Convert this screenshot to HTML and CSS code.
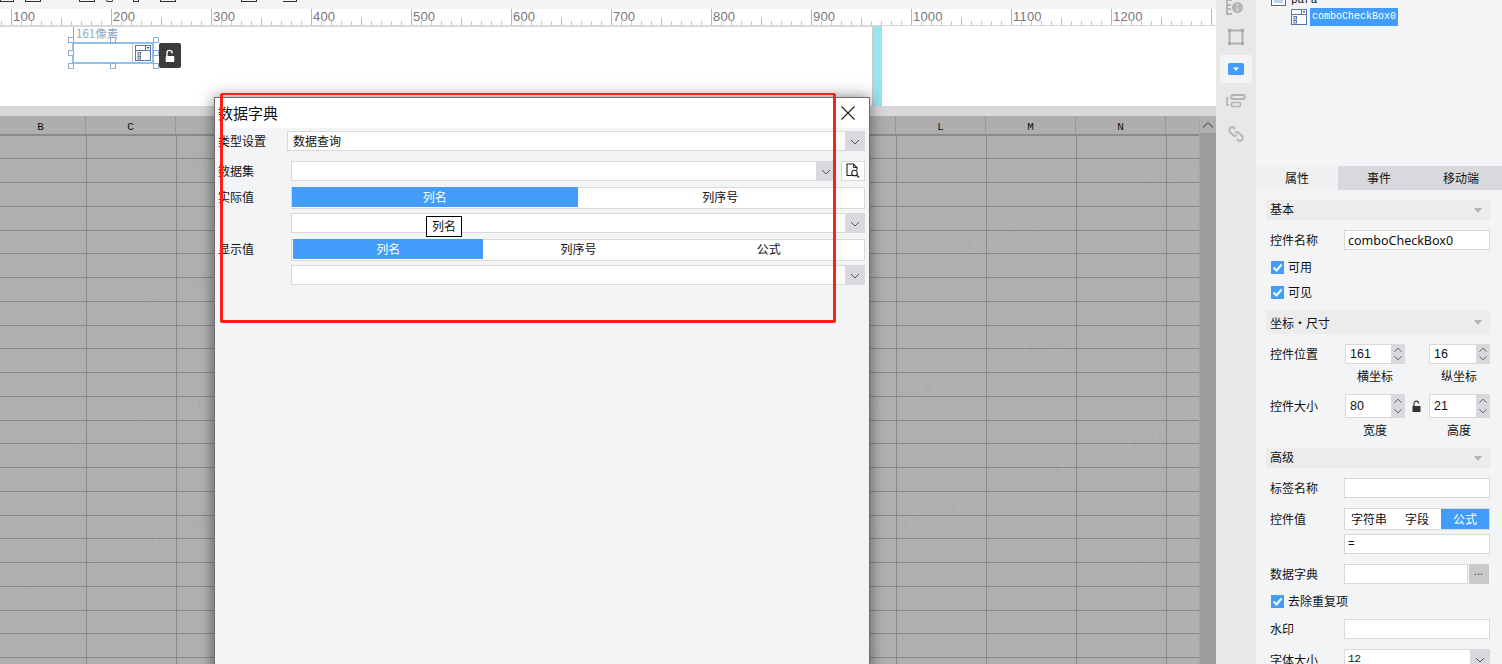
FILE: index.html
```html
<!DOCTYPE html>
<html lang="zh">
<head>
<meta charset="utf-8">
<title>数据字典</title>
<link rel="stylesheet" href="styles.css">
</head>
<body>
<div class="app">
  <main class="main">
    <div class="toolbar">
      <i class="tb tb1"></i><i class="tb tb2"></i><i class="tb tb3"></i><i class="tb tb4"></i><i class="tb tb5"></i><i class="tb tb6"></i><i class="tb tb7"></i><i class="tb tb8"></i>
    </div>
    <div class="ruler">
      <span>100</span><span>200</span><span>300</span><span>400</span><span>500</span><span>600</span><span>700</span><span>800</span><span>900</span><span>1000</span><span>1100</span><span>1200</span>
    </div>
    <div class="canvas">
      <div class="canvas-page"></div>
      <div class="canvas-edge"></div>
      <div class="pos-label">161像素</div>
      <div class="widget">
        <svg class="widget-icon" viewBox="0 0 16 16"><rect x=".5" y=".5" width="15" height="15" fill="#fff" stroke="#5a73a8"/><path d="M.5 5.5h15M10.500 .5v5" stroke="#5a73a8" fill="none"/><path d="M11.500 2h3l-1.500 2z" fill="#3a4f88"/><rect x="3" y="7.500" width="2.500" height="2.500" fill="none" stroke="#5a73a8"/><rect x="3" y="11.500" width="2.500" height="2.500" fill="none" stroke="#5a73a8"/></svg>
      </div>
      <i class="handle h-tl"></i><i class="handle h-tm"></i><i class="handle h-tr"></i><i class="handle h-ml"></i><i class="handle h-mr"></i><i class="handle h-bl"></i><i class="handle h-bm"></i><i class="handle h-br"></i>
      <div class="lock-tile">
        <svg viewBox="0 0 14 16" width="12" height="14"><path d="M3.500 8V4.500a3 3 0 0 1 6 0V5" fill="none" stroke="#fff" stroke-width="1.600"/><rect x="2" y="8" width="10" height="7" rx="1" fill="#fff"/></svg>
      </div>
    </div>
    <div class="band"></div>
    <div class="sheet">
      <div class="grid-area">
        <div class="col-head">
          <span>B</span><span>C</span><span></span><span></span><span></span><span></span><span></span><span></span><span></span><span></span><span>L</span><span>M</span><span>N</span><span></span>
        </div>
        <div class="cells">
          <div class="wm wm1">$fine_username + "" + SQL("OA", "select workcode from oaadmin.hrmresource where loginid = '" + $fine_username + "", 1, 1)</div>
          <div class="wm wm2">$fine_username + "" + SQL("OA", "select workcode from oaadmin.hrmresource where loginid = '" + $fine_username + "", 1, 1)</div>
          <div class="wm wm3">$fine_username + "" + SQL("OA", "select workcode from oaadmin.hrmresource where loginid = '" + $fine_username + "", 1, 1)</div>
          <div class="wm wm4">$fine_username + "" + SQL("OA", "select workcode from oaadmin.hrmresource where loginid = '" + $fine_username + "", 1, 1)</div>
          <div class="wm wm5">$fine_username + "" + SQL("OA", "select workcode from oaadmin.hrmresource where loginid = '" + $fine_username + "", 1, 1)</div>
          <div class="wm wm6">$fine_username + "" + SQL("OA", "select workcode from oaadmin.hrmresource where loginid = '" + $fine_username + "", 1, 1)</div>
          <div class="wm wm7">$fine_username + "" + SQL("OA", "select workcode from oaadmin.hrmresource where loginid = '" + $fine_username + "", 1, 1)</div>
          <div class="wm wm8">$fine_username + "" + SQL("OA", "select workcode from oaadmin.hrmresource where loginid = '" + $fine_username + "", 1, 1)</div>
        </div>
      </div>
      <div class="vscroll">
        <div class="vscroll-btn"><svg viewBox="0 0 12 8" width="12" height="8"><path d="M1 6.500 6 1.500l5 5" fill="none" stroke="#666" stroke-width="1.200"/></svg></div>
      </div>
    </div>
  </main>

  <nav class="rail">
    <div class="rail-item rail-first">
      <svg viewBox="0 0 20 20" width="20" height="20"><path d="M8 3H3v14h5" fill="none" stroke="#b4b4b4" stroke-width="2"/><path d="M3 8h4M3 12h4" stroke="#b4b4b4" stroke-width="2"/><circle cx="13.500" cy="10.500" r="5.500" fill="#b4b4b4"/><path d="M13.500 7v1.500M13.500 10v4" stroke="#e8e8e9" stroke-width="1.600"/></svg>
    </div>
    <div class="rail-item">
      <svg viewBox="0 0 16 16" width="16" height="16"><rect x="1.500" y="1.500" width="13" height="13" fill="none" stroke="#b0b0b0" stroke-width="2"/><path d="M0 0h3v3H0zM13 0h3v3h-3zM0 13h3v3H0zM13 13h3v3h-3z" fill="#a8a8a8"/></svg>
    </div>
    <div class="rail-item rail-active">
      <svg viewBox="0 0 16 12" width="16" height="12"><rect width="16" height="12" rx="1.500" fill="#429dfa"/><path d="M5 4.500h6L8 8z" fill="#fff"/></svg>
    </div>
    <div class="rail-item">
      <svg viewBox="0 0 20 14" width="20" height="14"><path d="M3 4H1v7h2" fill="none" stroke="#b4b4b4" stroke-width="1.500"/><rect x="5.500" y="1" width="13" height="4" rx="1" fill="none" stroke="#b4b4b4" stroke-width="2"/><rect x="5.500" y="8.500" width="9" height="4" rx="1" fill="none" stroke="#b4b4b4" stroke-width="1.600"/></svg>
    </div>
    <div class="rail-item">
      <svg viewBox="0 0 18 18" width="18" height="18"><g fill="none" stroke="#b8b8b8" stroke-width="2.200"><path d="M8 4 6.500 2.500a3 3 0 0 0-4 4L6 10a3 3 0 0 0 4 0"/><path d="M10 14l1.500 1.500a3 3 0 0 0 4-4L12 8a3 3 0 0 0-4 0"/></g></svg>
    </div>
  </nav>

  <aside class="panel">
    <div class="tree">
      <div class="tree-row tree-para">
        <svg viewBox="0 0 15 16" width="15" height="16"><rect x=".5" y=".5" width="14" height="15" fill="#fff" stroke="#666"/><rect x="3" y="3" width="9" height="10" fill="#bcd4f4"/></svg>
        <span class="tree-text">para</span>
      </div>
      <div class="tree-row tree-combo">
        <svg viewBox="0 0 16 16" width="16" height="16"><rect x=".5" y=".5" width="15" height="15" fill="#fff" stroke="#5a73a8"/><path d="M.5 5.500h15M10.500 .5v5" stroke="#5a73a8" fill="none"/><path d="M11.500 2h3l-1.500 2z" fill="#3a4f88"/><rect x="3" y="7.500" width="2.500" height="2.500" fill="none" stroke="#5a73a8"/><rect x="3" y="11.500" width="2.500" height="2.500" fill="none" stroke="#5a73a8"/></svg>
        <span class="tree-text tree-selected">comboCheckBox0</span>
      </div>
    </div>
    <div class="tabs">
      <span class="tab tab-active">属性</span><span class="tab">事件</span><span class="tab">移动端</span>
    </div>
    <div class="form">
      <div class="bar bar-basic"><span>基本</span><i class="tri"></i></div>
      <div class="prow r-name"><label>控件名称</label><div class="field field-text">comboCheckBox0</div></div>
      <div class="check r-c1"><i class="box"><svg viewBox="0 0 13 13"><path d="M2.500 6.500 5.500 9.500 10.500 3.500" fill="none" stroke="#fff" stroke-width="2"/></svg></i>可用</div>
      <div class="check r-c2"><i class="box"><svg viewBox="0 0 13 13"><path d="M2.500 6.500 5.500 9.500 10.500 3.500" fill="none" stroke="#fff" stroke-width="2"/></svg></i>可见</div>
      <div class="bar bar-pos"><span>坐标・尺寸</span><i class="tri"></i></div>
      <div class="prow r-pos">
        <label>控件位置</label>
        <div class="spin"><span>161</span><b class="spin-btns"><svg viewBox="0 0 14 20"><path d="M3 7.500l4-4 4 4M3 12.500l4 4 4-4" fill="none" stroke="#555"/></svg></b></div>
        <div class="spin-gap"></div>
        <div class="spin"><span>16</span><b class="spin-btns"><svg viewBox="0 0 14 20"><path d="M3 7.500l4-4 4 4M3 12.500l4 4 4-4" fill="none" stroke="#555"/></svg></b></div>
      </div>
      <div class="caps r-cap1"><span>横坐标</span><span>纵坐标</span></div>
      <div class="prow r-size">
        <label>控件大小</label>
        <div class="spin spin-tall"><span>80</span><b class="spin-btns"><svg viewBox="0 0 14 24"><path d="M3 8.500l4-4 4 4M3 15.500l4 4 4-4" fill="none" stroke="#555"/></svg></b></div>
        <div class="spin-gap"><svg viewBox="0 0 9 12" width="9" height="12"><path d="M2 6V3.500a2.300 2.300 0 0 1 4.600 0" fill="none" stroke="#333" stroke-width="1.200"/><rect x=".5" y="6" width="8" height="6" fill="#333"/></svg></div>
        <div class="spin spin-tall"><span>21</span><b class="spin-btns"><svg viewBox="0 0 14 24"><path d="M3 8.500l4-4 4 4M3 15.500l4 4 4-4" fill="none" stroke="#555"/></svg></b></div>
      </div>
      <div class="caps r-cap2"><span>宽度</span><span>高度</span></div>
      <div class="bar bar-adv"><span>高级</span><i class="tri"></i></div>
      <div class="prow r-label"><label>标签名称</label><div class="field"></div></div>
      <div class="prow r-val">
        <label>控件值</label>
        <div class="seg seg-small"><span>字符串</span><span>字段</span><span class="on">公式</span></div>
      </div>
      <div class="prow r-eq"><label></label><div class="field field-mono">=</div></div>
      <div class="prow r-dict"><label>数据字典</label><div class="field"></div><div class="more">•••</div></div>
      <div class="check r-c3"><i class="box"><svg viewBox="0 0 13 13"><path d="M2.500 6.500 5.500 9.500 10.500 3.500" fill="none" stroke="#fff" stroke-width="2"/></svg></i>去除重复项</div>
      <div class="prow r-wm"><label>水印</label><div class="field"></div></div>
      <div class="prow r-font"><label>字体大小</label><div class="field field-select"><span>12</span><b class="chev"><svg viewBox="0 0 10 6" width="10" height="6"><path d="M1 1 5 5 9 1" fill="none" stroke="#555"/></svg></b></div></div>
    </div>
  </aside>
</div>

<section class="dialog">
  <header class="dlg-title">
    <span>数据字典</span>
    <svg class="dlg-close" viewBox="0 0 14 14" width="14" height="14"><path d="M.5 .5l13 13M13.500 .5l-13 13" stroke="#1c1c1c" stroke-width="1.100"/></svg>
  </header>
  <div class="dlg-body">
    <div class="drow d1"><label class="l68">类型设置</label><div class="field field-select"><span>数据查询</span><b class="chev"><svg viewBox="0 0 10 6" width="10" height="6"><path d="M1 1 5 5 9 1" fill="none" stroke="#555"/></svg></b></div></div>
    <div class="drow d2"><label>数据集</label><div class="field field-select"><span></span><b class="chev"><svg viewBox="0 0 10 6" width="10" height="6"><path d="M1 1 5 5 9 1" fill="none" stroke="#555"/></svg></b></div>
      <div class="doc-btn"><svg viewBox="0 0 14 16" width="14" height="16"><path d="M9 12.500H1V1h6.500L11 4.500V7" fill="none" stroke="#222" stroke-width="1.100"/><path d="M7.500 1v3.500H11" fill="none" stroke="#222"/><circle cx="8.500" cy="10" r="2.800" fill="#fff" stroke="#222" stroke-width="1.100"/><path d="M10.500 12l2.500 2.500" stroke="#222" stroke-width="1.400"/></svg></div>
    </div>
    <div class="drow d3"><label>实际值</label><div class="seg seg-two"><span class="on">列名</span><span>列序号</span></div></div>
    <div class="drow d4"><label></label><div class="field field-select"><span></span><b class="chev"><svg viewBox="0 0 10 6" width="10" height="6"><path d="M1 1 5 5 9 1" fill="none" stroke="#555"/></svg></b></div></div>
    <div class="drow d5"><label>显示值</label><div class="seg seg-three"><span class="on">列名</span><span>列序号</span><span>公式</span></div></div>
    <div class="drow d6"><label></label><div class="field field-select"><span></span><b class="chev"><svg viewBox="0 0 10 6" width="10" height="6"><path d="M1 1 5 5 9 1" fill="none" stroke="#555"/></svg></b></div></div>
  </div>
  <div class="tooltip">列名</div>
</section>
<div class="annotation"></div>
</body>
</html>
```

FILE: styles.css
```css
* { box-sizing: border-box; }
html, body { margin: 0; height: 100%; overflow: hidden; }
body { width: 1502px; height: 664px; position: relative; font: 12px/1.2 "Noto Sans CJK SC", "Noto Sans", sans-serif; color: #111; background: #f3f4f6; }
i, b { display: block; font-style: normal; font-weight: normal; }
label { display: block; flex: none; }

.app { display: flex; width: 1502px; height: 664px; }
.main { width: 1216px; flex: none; display: flex; flex-direction: column; overflow: hidden; }

/* toolbar: only the bottom of the icons is visible */
.toolbar { height: 9px; background: #f3f4f6; display: flex; align-items: flex-start; }
.tb { height: 2px; border: 1px solid #333; border-top: 0; flex: none; }
.tb1 { width: 14px; }
.tb2 { width: 16px; margin-left: 11px; }
.tb3 { width: 16px; margin-left: 38px; }
.tb4 { width: 7px; margin-left: 11px; border-radius: 0 0 3px 3px; }
.tb5 { width: 6px; margin-left: 20px; }
.tb6 { width: 16px; margin-left: 21px; }
.tb7 { width: 16px; margin-left: 65px; }
.tb8 { width: 14px; margin-left: 26px; border-left: 0; border-top: 0; }

.ruler {
  height: 17px; background-color: #fff; display: flex; padding-left: 11px; border-bottom: 1px solid #d8d8d8;
  background-image:
    repeating-linear-gradient(90deg, #b8b8b8 0 1px, transparent 1px 100px),
    repeating-linear-gradient(90deg, #b8b8b8 0 1px, transparent 1px 50px),
    repeating-linear-gradient(90deg, #c8c8c8 0 1px, transparent 1px 10px);
  background-position: 11px 0, 11px 9px, 1px 12px;
  background-repeat: no-repeat;
  background-size: 100% 16px, 100% 7px, 100% 4px;
}
.ruler span { width: 100px; flex: none; padding-left: 2px; font: 13px/15px "Liberation Sans", sans-serif; color: #777; letter-spacing: .2px; }

.canvas { height: 80px; position: relative; background: #fff; display: flex; }
.canvas-page { width: 873px; flex: none; border-top: 1px solid #d8d8d8; border-right: 1px solid #c8c8c8; background: #fff; }
.canvas-edge { width: 9px; flex: none; background: #9ae4f2; }
.pos-label { position: absolute; left: 76px; top: 0; font-size: 11.500px; line-height: 14px; color: #8fa9c4; }
.pos-label::before { content: ""; position: absolute; left: -3px; top: 1px; height: 10px; border-left: 1px solid #8fa9c4; }
.widget { position: absolute; left: 72px; top: 16px; width: 82px; height: 22px; border: 2px solid #8fc0ee; background: #fff; display: flex; justify-content: flex-end; align-items: center; padding-right: 1px; }
.widget-icon { width: 16px; height: 16px; margin-left: auto; }
.widget::after { content: ""; position: absolute; right: 19px; top: 0; bottom: 0; border-left: 1px solid #c4c4c4; }
.handle { position: absolute; width: 6px; height: 6px; border: 1px solid #8fadcc; background: #fff; }
.h-tl { left: 68px; top: 11px; } .h-tm { left: 110px; top: 11px; } .h-tr { left: 153px; top: 11px; }
.h-ml { left: 68px; top: 24px; } .h-mr { left: 153px; top: 24px; }
.h-bl { left: 68px; top: 37px; } .h-bm { left: 110px; top: 37px; } .h-br { left: 153px; top: 37px; }
.lock-tile { position: absolute; left: 159px; top: 17px; width: 22px; height: 25px; border-radius: 2px; background: #3a3c3e; display: flex; align-items: center; justify-content: center; }

.band { height: 10px; background: #d8d8da; }
.sheet { flex: 1; display: flex; background: #b0b0b0; }
.grid-area { width: 1199px; flex: none; display: flex; flex-direction: column; overflow: hidden; }
.col-head { height: 19px; flex: none; display: flex; margin-left: -4px; background: #aeaeae; border-bottom: 1px solid #8a8a8a; }
.col-head span { width: 90px; flex: none; text-align: center; border-right: 1px solid #989898; font: 11px/22px "Liberation Mono", monospace; color: #111; }
.cells {
  flex: 1; position: relative; overflow: hidden; background-color: #b0b0b0;
  background-image:
    linear-gradient(90deg, transparent 86px, #8a8a8a 86px 87px, transparent 87px),
    linear-gradient(#8a8a8a 0 1px, transparent 1px 23px, #8a8a8a 23px 24px, transparent 24px 47px, #8a8a8a 47px 48px, transparent 48px 71px, #8a8a8a 71px 72px, transparent 72px);
  background-size: 90px 100%, 100% 95px;
  background-repeat: repeat-x, repeat-y;
}
.wm { position: absolute; white-space: nowrap; height: 20px; font: 15px/20px "Open Sans", sans-serif; letter-spacing: .6px; color: rgba(0, 0, 0, .04); transform: rotate(-19.500deg); transform-origin: 0 50%; }
.wm1 { left: 768px; top: 171px; }
.wm2 { left: 326px; top: 454px; }
.wm3 { left: 843px; top: 400px; }
.wm4 { left: 406px; top: 671px; }
.wm5 { left: -262px; top: 298px; }
.wm6 { left: -157px; top: 503px; }
.wm7 { left: -684px; top: 568px; }
.wm8 { left: 178px; top: 20px; }
.vscroll { flex: 1; background: #9c9c9c; border-left: 1px solid #a6a6a6; }
.vscroll-btn { height: 17px; background: #b0b0b0; display: flex; align-items: center; justify-content: center; }

/* icon rail */
.rail { width: 40px; flex: none; background: #e8e8e9; display: flex; flex-direction: column; align-items: center; }
.rail-item { width: 32px; display: flex; align-items: center; justify-content: center; height: 32px; }
.rail-first { height: 20px; margin-top: -3px; margin-bottom: 4px; margin-left: -4px; }
.rail-active { height: 28px; margin-top: 2px; background: #f3f4f6; }
.rail-item:nth-child(4) { margin-top: 1px; height: 33px; }
.rail-item:nth-child(5) { height: 33px; }

/* right panel */
.panel { width: 246px; flex: none; background: #f3f4f6; overflow: hidden; display: flex; flex-direction: column; }
.tree { height: 166px; flex: none; }
.tree-row { display: flex; align-items: center; }
.tree-para { height: 16px; margin-top: -10px; padding-left: 15px; gap: 5px; }
.tree-text { font: 10px/18px "Liberation Mono", monospace; color: #111; }
.tree-para .tree-text { line-height: 16px; position: relative; top: 2px; font-size: 11px; }
.tree-combo { height: 18px; margin-top: 2px; padding-left: 35px; gap: 3px; }
.tree-selected { height: 18px; padding: 0 2px; background: #429dfa; color: #fff; }
.tabs { height: 24px; flex: none; display: flex; background: #d8d9dc; }
.tab { flex: 1; display: flex; align-items: center; justify-content: center; font-size: 12px; }
.tab-active { background: #eff0f2; }

.form { padding: 10px 12px 0 10px; flex: 1; }
.bar { height: 20px; background: #ececec; display: flex; align-items: center; justify-content: space-between; padding: 0 8px 0 4px; }
.bar-basic span, .bar-adv span { position: relative; top: -1px; }
.bar-pos span { position: relative; top: 1px; }
.tri { width: 0; height: 0; border: 4px solid transparent; border-top: 5px solid #b4b4b4; border-bottom: 0; }
.prow { display: flex; align-items: center; height: 20px; }
.prow label { width: 78px; padding-left: 4px; }
.field { flex: 1; height: 100%; background: #fff; border: 1px solid #d9d9d9; display: flex; align-items: center; min-width: 0; }
.field-text { padding-left: 3px; font: 12.500px "Noto Sans", sans-serif; }
.field-mono { padding-left: 3px; font: 11px "Liberation Mono", monospace; }
.field-select { justify-content: space-between; padding-left: 5px; }
.chev { width: 20px; height: calc(100% + 1px); align-self: stretch; background: #d8d9dc; display: flex; align-items: center; justify-content: center; flex: none; margin: 0 -1px -1px 0; }
.check { height: 20px; display: flex; align-items: center; padding-left: 5px; gap: 4px; }
.box { width: 13px; height: 13px; background: #429dfa; flex: none; }
.box svg { display: block; width: 13px; height: 13px; }
.r-name { margin-top: 10px; }
.r-c1 { margin-top: 7px; }
.r-c2 { margin-top: 5px; }
.bar-pos { margin-top: 8px; height: 24px; }
.r-pos { margin-top: 10px; }
.r-size { margin-top: 8px; height: 24px; }
.spin { width: 60px; flex: none; height: 100%; background: #fff; border: 1px solid #d9d9d9; border-right: 0; display: flex; align-items: center; justify-content: space-between; padding-left: 4px; margin-left: 1px; font: 12.500px "Liberation Sans", sans-serif; }
.spin-gap { width: 23px; flex: none; display: flex; align-items: center; justify-content: center; }
.spin-gap + .spin { width: 61px; }
.spin-btns { width: 14px; height: 100%; background: #d8d9dc; flex: none; }
.spin-btns svg { display: block; width: 14px; height: 100%; }
.caps { display: flex; height: 20px; align-items: center; padding-left: 79px; }
.caps span { width: 60px; text-align: center; }
.caps span + span { margin-left: 24px; }
.r-cap1 { margin-top: 2px; }
.r-cap2 { margin-top: 2px; }
.bar-adv { margin-top: 8px; }
.r-label { margin-top: 10px; }
.r-val { margin-top: 10px; height: 22px; }
.r-eq { margin-top: 4px; }
.r-dict { margin-top: 10px; }
.more { width: 20px; margin-left: 1px; margin-right: 1px; height: 100%; background: #c9c9cb; color: #666; display: flex; align-items: center; justify-content: center; flex: none; font: 6px "Liberation Sans", sans-serif; letter-spacing: 1px; }
.r-c3 { margin-top: 7px; }
.r-wm { margin-top: 8px; }
.r-font { margin-top: 10px; }
.r-font label { position: relative; top: 1px; }
.r-font .field-select { padding-left: 3px; font: 11px "Liberation Mono", monospace; }

.seg { flex: 1; height: 100%; background: #fff; border: 1px solid #d9d9d9; display: flex; }
.seg span { flex: 1; display: flex; align-items: center; justify-content: center; }
.seg .on { background: #429dfa; color: #fff; }
.seg-small span { flex: none; width: 48px; }
.seg-three { padding-left: 1px; }
.seg-two { padding-right: 1px; }

/* dialog */
.dialog { position: absolute; left: 214px; top: 97px; width: 656px; height: 580px; background: #f3f4f6; border: 1px solid #6e6e6e; box-shadow: 0 0 14px rgba(0, 0, 0, .5); }
.dlg-title { height: 30px; background: #fff; display: flex; align-items: center; justify-content: space-between; padding: 0 14px 0 3px; font-size: 15px; }
.dlg-body { padding: 3px 4px 0 3px; display: flex; flex-direction: column; }
.drow { display: flex; align-items: center; }
.drow label { width: 73px; }
.drow label.l68 { width: 69px; }
.d3 label, .d5 label, .seg-two span, .seg-three span { position: relative; top: -1px; }
.d3 .seg-two, .d5 .seg-three { position: relative; }
.d1 { height: 20px; }
.d2 { height: 20px; margin-top: 10px; }
.d3 { height: 22px; margin-top: 6px; }
.d4 { height: 20px; margin-top: 4px; }
.d5 { height: 22px; margin-top: 6px; }
.d6 { height: 20px; margin-top: 4px; }
.doc-btn { width: 24px; height: 100%; margin-left: 5px; background: #fff; border: 1px solid #d9d9d9; display: flex; align-items: center; justify-content: center; flex: none; }
.tooltip { position: absolute; left: 211px; top: 118px; width: 36px; height: 21px; background: #fff; border: 1px solid #000; display: flex; align-items: center; justify-content: center; font-size: 12px; }
.annotation { position: absolute; left: 220px; top: 93px; width: 616px; height: 230px; border: 3px solid #ff2015; border-top-width: 2px; border-radius: 2px; }
```
